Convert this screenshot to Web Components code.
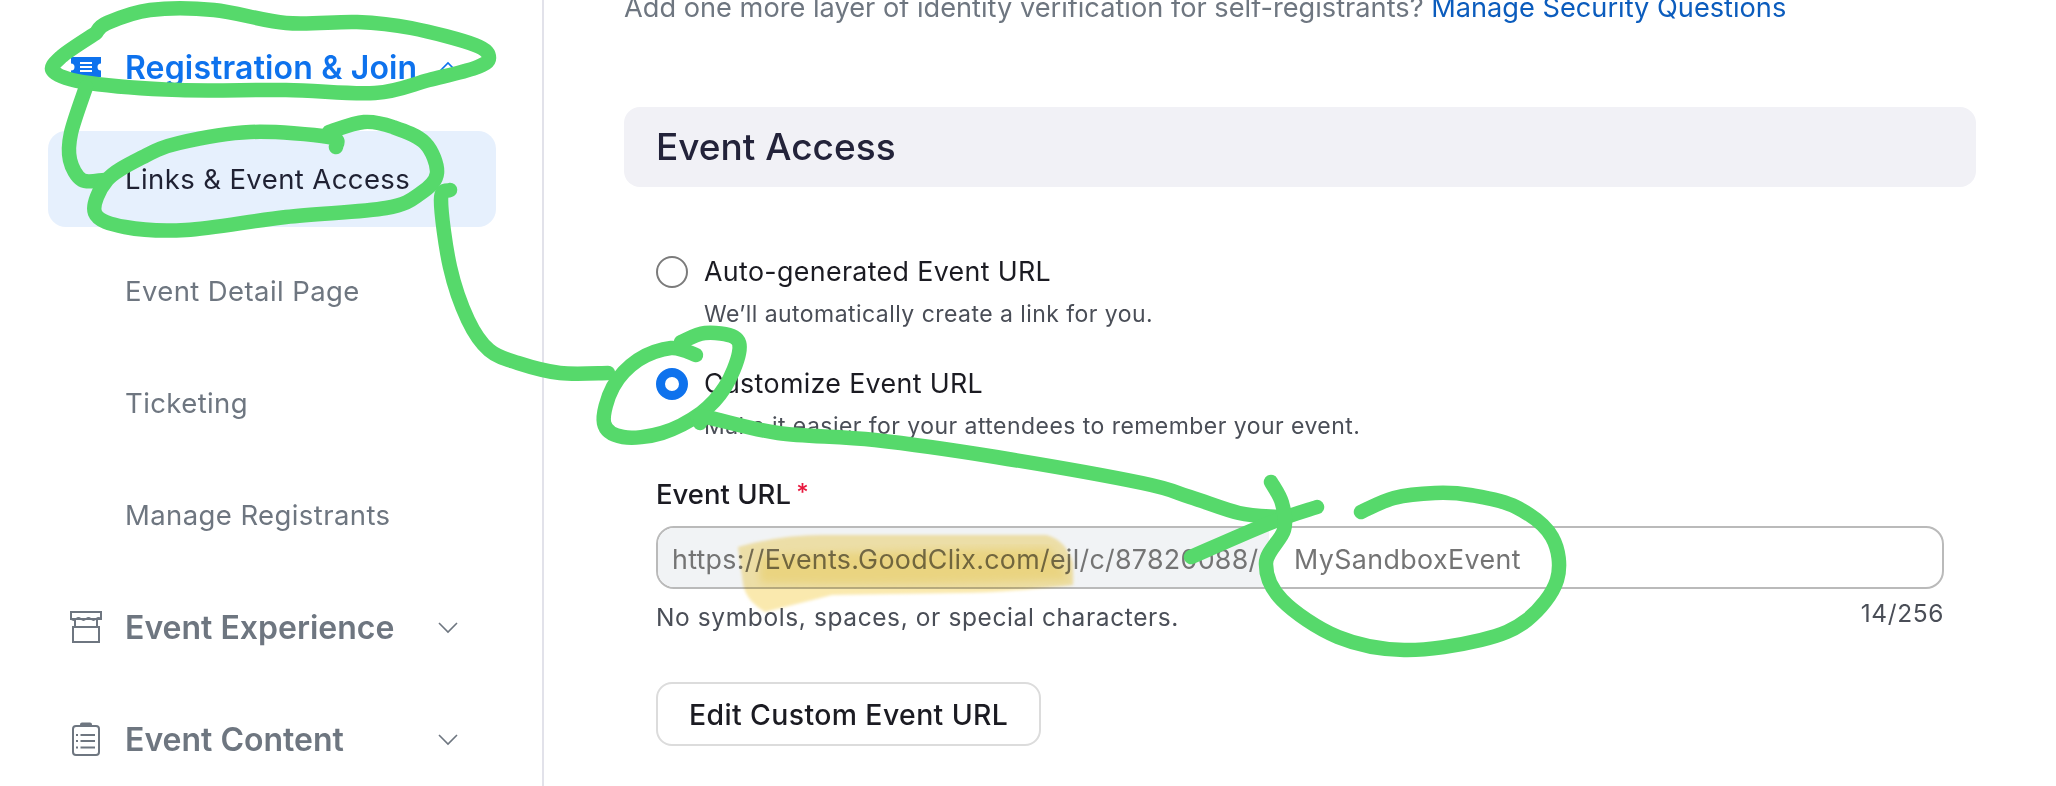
<!DOCTYPE html>
<html>
<head>
<meta charset="utf-8">
<title>Event Access</title>
<style>
  html, body { margin: 0; height: 100%; overflow: hidden; background: #fff; }
  body { font-family: Inter, "Liberation Sans", sans-serif; }
  .page { display: flex; height: 786px; }
  .lead { margin: 0; }
  .lead a { color: #0b5cbd; }
</style>
</head>
<body>
<div class="page">
  <side-nav>
    <nav-group active label="Registration &amp; Join" open>
      <svg slot="icon" viewBox="0 0 32 32" width="32" height="32"><path fill="#0e72ed" d="M1 6h30v6.500a3.500 3.500 0 0 0 0 7V26H1v-6.500a3.500 3.500 0 0 0 0-7z"/><path stroke="#fff" stroke-width="2" d="M10 12h12M10 16h12M10 20h12"/></svg>
    </nav-group>
    <nav-item current>Links &amp; Event Access</nav-item>
    <nav-item>Event Detail Page</nav-item>
    <nav-item>Ticketing</nav-item>
    <nav-item>Manage Registrants</nav-item>
    <nav-group label="Event Experience">
      <svg slot="icon" viewBox="0 0 32 32" width="32" height="32" fill="none" stroke="#6e7680" stroke-width="2"><path d="M1 1h30v7H1zM5 9v7M27 9v7M3 16h26v15H3z"/><path stroke-width="1.200" d="M1 8q2.500 2.600 5 0t5 0 5 0 5 0 5 0 5 0"/></svg>
    </nav-group>
    <nav-group label="Event Content">
      <svg slot="icon" viewBox="0 0 32 34" width="32" height="34" fill="none" stroke="#6e7680" stroke-width="2"><rect x="3" y="4" width="26" height="29" rx="3"/><path fill="#6e7680" d="M11 4V2.500q0-1 1-1h8q1 0 1 1V4z"/><path d="M10.500 13h14.500M10.500 19h14.500M10.500 25.500h14.500"/><path d="M6 13h2M6 19h2M6 25.500h2"/></svg>
    </nav-group>
  </side-nav>
  <main-pane>
    <p class="lead" slot="lead">Add one more layer of identity verification for self-registrants? <a>Manage Security Questions</a></p>
    <section-bar>Event Access</section-bar>
    <radio-option hint="We’ll automatically create a link for you.">Auto-generated Event URL</radio-option>
    <radio-option checked hint="Make it easier for your attendees to remember your event.">Customize Event URL</radio-option>
    <url-field label="Event URL" prefix="https://Events.GoodClix.com/ejl/c/87820088/" value="MySandboxEvent" hint="No symbols, spaces, or special characters." count="14/256"></url-field>
    <plain-button>Edit Custom Event URL</plain-button>
  </main-pane>
</div>
<ink-notes></ink-notes>

<script>
class sideNav extends HTMLElement {
    connectedCallback() {
        this.attachShadow({mode:'open'}).innerHTML = `
            <style>
            :host { display: flex; flex-direction: column; box-sizing: border-box; width: 544px; flex: none;
                    height: 786px; padding: 11px 46px 0 48px; border-right: 2px solid #e2e2ea; }
            </style>
            <slot></slot>
        `;
    }
}

class navGroup extends HTMLElement {
    connectedCallback() {
        var chevron = this.hasAttribute('open') ? 'M2 11l9-9 9 9' : 'M2 2l9 9 9-9';
        this.attachShadow({mode:'open'}).innerHTML = `
            <style>
            :host { display: flex; align-items: center; height: 112px; flex: none; padding-left: 22px;
                    font-size: 32px; font-weight: 600; color: #6e7680; }
            :host([active]) { color: #0e72ed; letter-spacing: .15px; }
            .icon { width: 33px; margin-right: 22px; display: flex; }
            .label { width: 312px; white-space: nowrap; }
            svg { display: block; }
            </style>
            <span class="icon"><slot name="icon"></slot></span>
            <span class="label">${this.getAttribute('label').replace('&', '&amp;')}</span>
            <svg width="22" height="13" viewBox="0 0 22 13" fill="none" stroke="currentColor" stroke-width="1.600"><path d="${chevron}"/></svg>
        `;
    }
}

class navItem extends HTMLElement {
    connectedCallback() {
        this.attachShadow({mode:'open'}).innerHTML = `
            <style>
            :host { display: flex; align-items: center; box-sizing: border-box; flex: none; height: 96px; margin: 8px 0;
                    padding-left: 77px; border-radius: 18px; font-size: 27.500px; color: #6e7680; letter-spacing: .4px; }
            :host([current]) { background: #e6f0fd; color: #1f2133; }
            </style>
            <slot></slot>
        `;
    }
}

class mainPane extends HTMLElement {
    connectedCallback() {
        this.attachShadow({mode:'open'}).innerHTML = `
            <style>
            :host { display: block; box-sizing: border-box; flex: 1; min-width: 0; padding: 0 80px; }
            .top { margin: -8px 0 84px; height: 31px; line-height: 31px; font-size: 27.200px; color: #6e7680; white-space: nowrap; }
            </style>
            <div class="top"><slot name="lead"></slot></div>
            <slot></slot>
        `;
    }
}

class sectionBar extends HTMLElement {
    connectedCallback() {
        this.attachShadow({mode:'open'}).innerHTML = `
            <style>
            :host { display: flex; align-items: center; box-sizing: border-box; height: 80px; padding: 0 0 2px 32px; margin-bottom: 69px;
                    border-radius: 16px; background: #f1f1f6; font-size: 37px; font-weight: 500; color: #23233a; }
            </style>
            <slot></slot>
        `;
    }
}

class radioOption extends HTMLElement {
    connectedCallback() {
        var hint = this.getAttribute('hint');
        this.attachShadow({mode:'open'}).innerHTML = `
            <style>
            :host { display: grid; grid-template-columns: 32px 1fr; column-gap: 16px; margin: 0 0 26px 32px; height: 86px;
                    grid-template-rows: 32px 54px; align-items: center; }
            .dot { width: 32px; height: 32px; box-sizing: border-box; border: 2px solid #7b7b7b; border-radius: 50%; }
            :host([checked]) .dot { border: 9px solid #0e72ed; background: #fff; }
            .name { font-size: 26.800px; color: #1b1b22; letter-spacing: .35px; white-space: nowrap; margin-top: -2px; }
            .hint { grid-column: 2; font-size: 23px; color: #4a4e57; letter-spacing: .45px; white-space: nowrap; margin-top: -2px; }
            </style>
            <span class="dot"></span>
            <span class="name"><slot></slot></span>
            <span class="hint">${hint}</span>
        `;
    }
}

class urlField extends HTMLElement {
    connectedCallback() {
        var get = (n) => this.getAttribute(n);
        this.attachShadow({mode:'open'}).innerHTML = `
            <style>
            :host { display: block; margin: -5px 32px 0 32px; }
            .label { height: 36px; line-height: 36px; font-size: 27.500px; font-weight: 500; color: #1b1b22; margin-bottom: 15px; }
            .label i { font-style: normal; color: #e8173d; font-size: 24px; vertical-align: 3px; margin-left: -2px; }
            .box { display: flex; height: 63px; box-sizing: border-box; border: 2px solid #bababa; border-radius: 18px; overflow: hidden; font-size: 26.800px; color: #747474; letter-spacing: .3px; }
            .prefix { display: flex; align-items: center; width: 611px; flex: none; padding: 2px 0 0 14px; box-sizing: border-box; background: #f1f3f5; white-space: nowrap; overflow: hidden; }
            .value { display: flex; align-items: center; padding: 2px 0 0 25px; letter-spacing: .4px; }
            .foot { display: flex; justify-content: space-between; margin-top: 13px; height: 30px; line-height: 30px; font-size: 24.500px; color: #4a4e57; letter-spacing: .6px; }
            .count { margin-top: -4px; }
            </style>
            <div class="label">${get('label')} <i>*</i></div>
            <div class="box"><span class="prefix">${get('prefix')}</span><span class="value">${get('value')}</span></div>
            <div class="foot"><span>${get('hint')}</span><span class="count">${get('count')}</span></div>
        `;
    }
}

class plainButton extends HTMLElement {
    connectedCallback() {
        this.attachShadow({mode:'open'}).innerHTML = `
            <style>
            :host { display: inline-flex; align-items: center; box-sizing: border-box; height: 64px; margin: 50px 0 0 32px; padding: 0 31px;
                    border: 2px solid #dcdcdc; border-radius: 16px; font-size: 28.400px; font-weight: 500; color: #1b1b22; letter-spacing: .4px; }
            </style>
            <slot></slot>
        `;
    }
}

// hand drawn marks on top of the screenshot
class inkNotes extends HTMLElement {
    connectedCallback() {
        var smooth = (pts) => {
            var d = 'M' + pts[0];
            for (var i = 0; i < pts.length - 1; i++) {
                var p0 = pts[Math.max(i - 1, 0)], p1 = pts[i], p2 = pts[i + 1], p3 = pts[Math.min(i + 2, pts.length - 1)];
                var c1 = [p1[0] + (p2[0] - p0[0]) / 6, p1[1] + (p2[1] - p0[1]) / 6];
                var c2 = [p2[0] - (p3[0] - p1[0]) / 6, p2[1] - (p3[1] - p1[1]) / 6];
                d += 'C' + c1 + ' ' + c2 + ' ' + p2;
            }
            return d;
        };
        var strokes = [
            [[96,33],[107,23],[150,10],[214,10],[286,23],[357,22],[411,28],[475,45],[489,58],[475,68],[429,80],[375,93],[286,90],[179,90],[89,83],[54,72],[61,57],[96,33]],
            [[86,87],[71,133],[70,160],[82,180],[104,180]],
            [[336,147],[329,137],[250,132],[179,143],[143,157],[107,180],[95,213],[125,227],[186,230],[286,217],[386,208],[421,193],[437,173],[425,143],[393,127],[364,122],[329,132]],
            [[450,190],[441,200],[450,267],[468,320],[489,350],[518,363],[560,373],[608,373]],
            [[696,355],[671,348],[638,360],[613,387],[604,423],[623,437],[662,433],[701,413],[725,387],[739,353],[734,337],[705,333],[681,342]],
            [[700,423],[705,417],[778,433],[875,440],[996,457],[1142,483],[1190,497],[1239,513],[1277,517]],
            [[1191,557],[1270,523],[1317,507]],
            [[1271,482],[1282,503],[1284,530],[1266,563],[1282,600],[1338,637],[1404,650],[1481,640],[1527,620],[1557,580],[1552,537],[1516,507],[1470,495],[1435,493],[1394,498],[1361,512]]
        ];
        var ink = strokes.map((s) => `<path d="${smooth(s)}"/>`).join('');
        this.attachShadow({mode:'open'}).innerHTML = `
            <style>
            :host { position: absolute; left: 0; top: 0; width: 2056px; height: 786px; pointer-events: none; }
            svg { position: absolute; left: 0; top: 0; }
            .marker { mix-blend-mode: multiply; }
            </style>
            <svg class="marker" width="2056" height="786" viewBox="0 0 2056 786">
                <filter id="soft"><feGaussianBlur stdDeviation="1.500"/></filter>
                <filter id="softer"><feGaussianBlur stdDeviation="4"/></filter>
                <path filter="url(#soft)" fill="#fae9ae" d="M738 547Q780 535 823 535L1046 535Q1066 540 1073 563L1073 585Q1000 593 957 593L832 595L765 612Q745 600 743 583Z"/>
                <path filter="url(#softer)" fill="#f8df85" d="M760 556Q900 550 1050 548L1070 580Q900 586 760 583Z"/>
            </svg>
            <svg width="2056" height="786" viewBox="0 0 2056 786" fill="none" stroke="#56d96b" stroke-width="14.500" stroke-linecap="round" stroke-linejoin="round">${ink}</svg>
        `;
    }
}

customElements.define("side-nav", sideNav);
customElements.define("nav-group", navGroup);
customElements.define("nav-item", navItem);
customElements.define("main-pane", mainPane);
customElements.define("section-bar", sectionBar);
customElements.define("radio-option", radioOption);
customElements.define("url-field", urlField);
customElements.define("plain-button", plainButton);
customElements.define("ink-notes", inkNotes);
</script>
</body>
</html>
